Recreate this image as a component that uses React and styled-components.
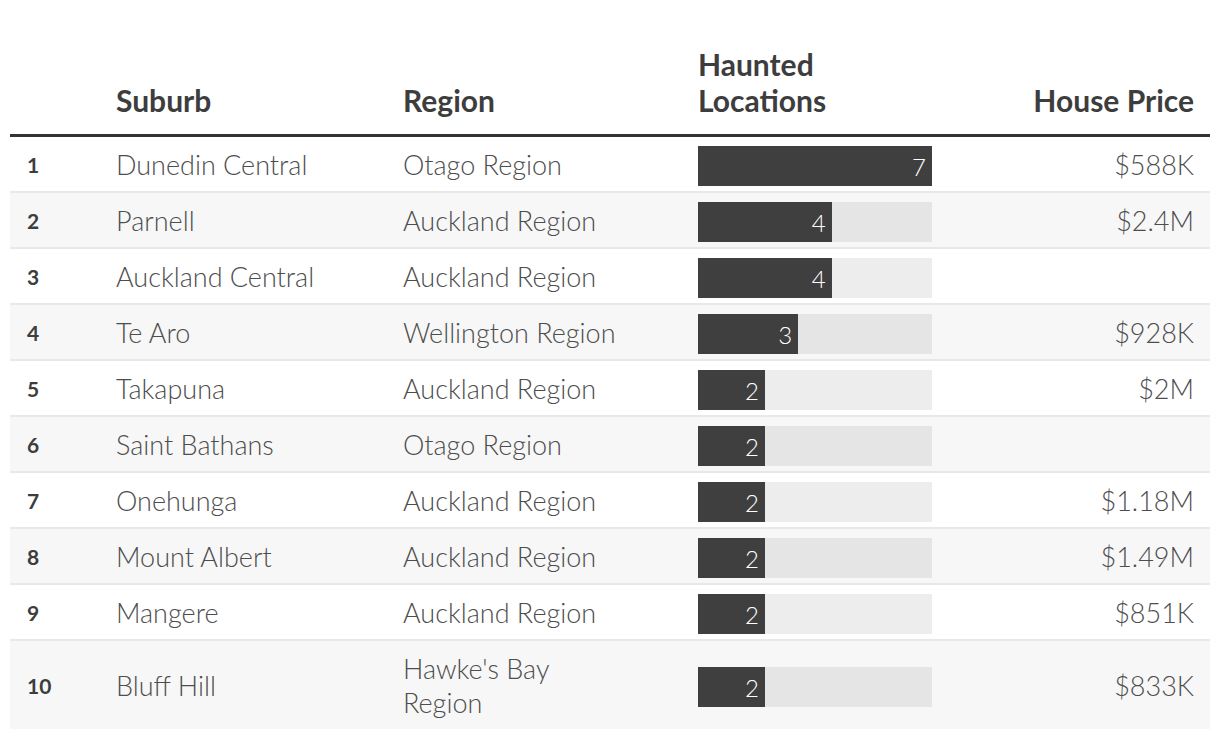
import React from "react";
import styled, { createGlobalStyle } from "styled-components";

const rows = [
  { rank: 1, suburb: "Dunedin Central", region: "Otago Region", count: 7, price: "$588K" },
  { rank: 2, suburb: "Parnell", region: "Auckland Region", count: 4, price: "$2.4M" },
  { rank: 3, suburb: "Auckland Central", region: "Auckland Region", count: 4, price: "" },
  { rank: 4, suburb: "Te Aro", region: "Wellington Region", count: 3, price: "$928K" },
  { rank: 5, suburb: "Takapuna", region: "Auckland Region", count: 2, price: "$2M" },
  { rank: 6, suburb: "Saint Bathans", region: "Otago Region", count: 2, price: "" },
  { rank: 7, suburb: "Onehunga", region: "Auckland Region", count: 2, price: "$1.18M" },
  { rank: 8, suburb: "Mount Albert", region: "Auckland Region", count: 2, price: "$1.49M" },
  { rank: 9, suburb: "Mangere", region: "Auckland Region", count: 2, price: "$851K" },
  { rank: 10, suburb: "Bluff Hill", region: "Hawke's Bay Region", count: 2, price: "$833K" },
];

const MAX = 7;

const App = () => {
  return (
    <>
      <GlobalStyle />
      <Table>
        <HeaderRow>
          <HeadCell />
          <HeadCell>Suburb</HeadCell>
          <HeadCell>Region</HeadCell>
          <HeadCell>Haunted Locations</HeadCell>
          <HeadCell align="right">House Price</HeadCell>
        </HeaderRow>
        {rows.map((r, i) => (
          <Row key={r.rank} striped={i % 2 === 1} last={i === rows.length - 1}>
            <RankCell>{r.rank}</RankCell>
            <Cell>{r.suburb}</Cell>
            <Cell narrow>{r.region}</Cell>
            <BarCell>
              <Track>
                <Fill style={{ width: `${(r.count / MAX) * 100}%` }}>{r.count}</Fill>
              </Track>
            </BarCell>
            <Cell align="right">{r.price}</Cell>
          </Row>
        ))}
      </Table>
    </>
  );
};

export default App;

const GlobalStyle = createGlobalStyle`
  body {
    margin: 0;
    background: #ffffff;
    font-family: Lato, "Open Sans", sans-serif;
    color: #3d3d3d;
  }
`;

const Table = styled.div`
  margin: 0 10px;
  padding-top: 46px;
`;

const grid = `
  display: grid;
  grid-template-columns: 90px 287px 295px 266px 262px;
`;

const HeaderRow = styled.div`
  ${grid}
  align-items: end;
  border-bottom: 3px solid #333333;
  padding-bottom: 16px;
`;

const HeadCell = styled.div`
  padding: 0 16px;
  font-weight: 700;
  font-size: 30px;
  line-height: 36px;
  color: #3d3d3d;
  text-align: ${(p) => p.align || "left"};
`;

const Row = styled.div`
  ${grid}
  align-items: center;
  background: ${(p) => (p.striped ? "#f7f7f7" : "#ffffff")};
  border-bottom: ${(p) => (p.last ? "none" : "2px solid #e8e8e8")};
  min-height: 54px;
`;

const Cell = styled.div`
  padding: 11px 16px 9px;
  padding-right: ${(p) => (p.narrow ? "64px" : "16px")};
  font-family: "Lato Light", Lato, sans-serif;
  font-weight: 300;
  font-size: 27px;
  line-height: 34px;
  color: #4d4d4d;
  text-align: ${(p) => p.align || "left"};
`;

const RankCell = styled.div`
  padding: 11px 17px 9px;
  font-weight: 700;
  font-size: 21px;
  line-height: 34px;
  color: #3d3d3d;
`;

const BarCell = styled.div`
  padding: 9px 16px 5px;
`;

const Track = styled.div`
  display: flex;
  width: 234px;
  height: 40px;
  background: rgba(0, 0, 0, 0.07);
`;

const Fill = styled.div`
  display: flex;
  align-items: center;
  justify-content: flex-end;
  box-sizing: border-box;
  padding-right: 6px;
  height: 100%;
  background: #3f3f3f;
  color: #ffffff;
  font-family: "Lato Light", Lato, sans-serif;
  font-weight: 300;
  font-size: 24px;
`;
